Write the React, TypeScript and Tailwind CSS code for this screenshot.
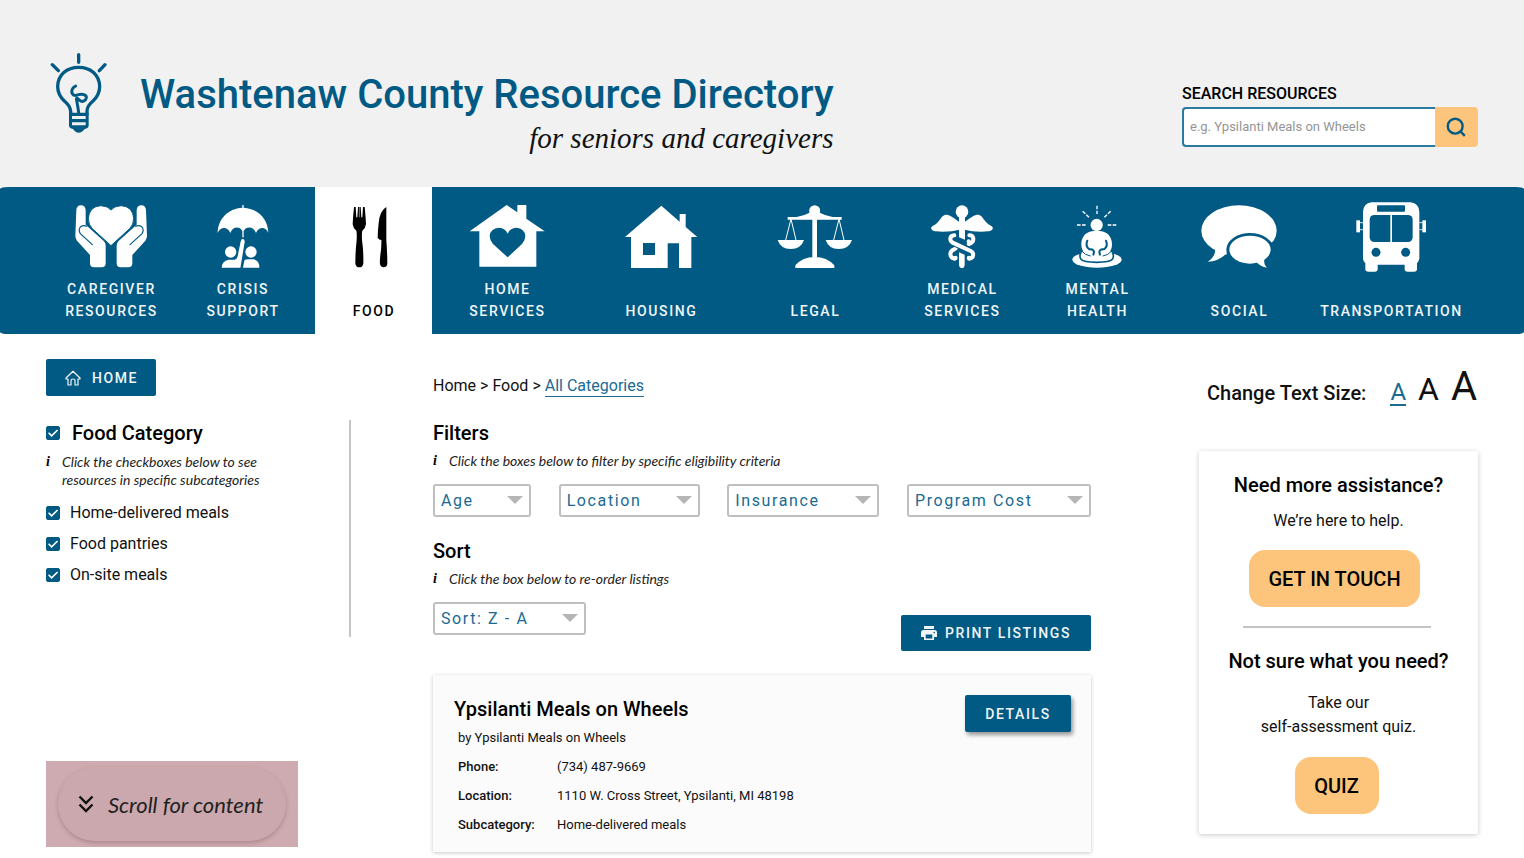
import React, { useState } from "react";

const BLUE = "#005a84";

function BulbLogo() {
  return (
    <svg viewBox="150 66 174 246" className="h-[82px] w-[58px] shrink-0" fill="none" stroke={BLUE} strokeLinecap="round" aria-hidden="true">
      <path strokeWidth="10" d="M236 74V97M157 104L175 122M315 104L298 122" />
      <path strokeWidth="10" strokeLinecap="butt" d="M212 254V244C211 230 203 221 193 213C180 201 173 188 173 169C174 134 200 112 236 112C272 112 298 134 299 169C299 188 292 201 279 213C269 221 261 230 261 244V254" />
      <path strokeWidth="9" d="M227 168C216 173 213 184 217 191C221 200 229 196 236 194C246 190 260 195 259 203C257 214 246 217 239 211C232 205 228 201 230 211C232 224 235 234 236 250" />
      <path fill={BLUE} stroke="none" fillRule="evenodd" d="M207 248H266V286Q266 296 254 297Q246 308 236 308Q226 308 219 297Q207 296 207 286ZM216 258V267H257V258ZM216 277V286H257V277Z" />
    </svg>
  );
}

function CaregiverIcon() {
  const hand = (
    <>
      <path fill="#fff" d="M229 90Q230 76 243 76Q256 76 257 90V134L312 184Q317 189 317 197V250Q317 262 305 262H282Q270 262 270 250V225L231 182Q226 176 226 168Z" />
      <path stroke={BLUE} strokeWidth="3.5" strokeLinecap="round" fill="none" d="M277 194L241 161Q234 150 241 141Q250 134 260 139" />
    </>
  );
  return (
    <svg viewBox="222 66 222 210" className="h-[70px] w-[74px]" aria-hidden="true">
      {hand}
      <g transform="translate(667 0) scale(-1 1)">{hand}</g>
      <path fill="#fff" stroke={BLUE} strokeWidth="3" d="M333 197L277 146Q265 134 265 116Q267 79 303 77Q324 78 333 90Q342 78 363 77Q399 79 401 116Q401 134 389 146Z" />
    </svg>
  );
}

function CrisisIcon() {
  return (
    <svg viewBox="646 66 162 210" className="h-[70px] w-[54px]" fill="#fff" aria-hidden="true">
      <path d="M651 159C652 116 682 86 725 83V75H729V83C772 86 802 116 803 159C796 139 774 139 766 159C759 139 737 138 729 153V176H725V153C717 138 696 139 689 159C681 139 659 139 651 159Z" />
      <circle cx="690" cy="216" r="17" />
      <circle cx="751" cy="216" r="17" />
      <path stroke={BLUE} strokeWidth="4" d="M718 184Q720 174 727 174Q735 176 734 186L721 265H661Q661 240 684 237H701Q707 236 709 228Z" />
      <path d="M727 263L731 242Q733 238 745 238H758Q776 240 776 263Z" />
    </svg>
  );
}

function FoodIcon() {
  return (
    <svg viewBox="1057 66 129 210" className="h-[70px] w-[43px]" fill="#000" aria-hidden="true">
      <path d="M1063 81H1068L1070 112H1073L1075 81H1083L1085 112H1088L1090 81H1095Q1098 110 1099 132Q1098 144 1088 152Q1086 158 1087 180Q1092 215 1091 251Q1089 262 1079 262Q1069 262 1067 251Q1067 215 1071 180Q1072 158 1070 152Q1060 144 1059 132Q1060 110 1063 81Z" />
      <path stroke="#fff" strokeWidth="1.5" d="M1079 81V112" />
      <path d="M1160 81Q1140 92 1137 130Q1134 155 1134 173Q1138 180 1145 180Q1146 200 1142 225Q1140 245 1141 253Q1144 262 1152 262Q1161 262 1163 252Q1163 220 1160 180Z" />
    </svg>
  );
}

function HomeServicesIcon() {
  return (
    <svg viewBox="118 66 228 210" className="h-[70px] w-[76px]" fill="#fff" fillRule="evenodd" aria-hidden="true">
      <path d="M120 154L231 75L263 97V75H290V116L345 154H320V260H149V154ZM234 232L190 192Q180 181 180 168Q182 145 208 143Q227 144 234 161Q241 144 260 143Q285 145 287 168Q287 181 277 192Z" />
    </svg>
  );
}

function HousingIcon() {
  return (
    <svg viewBox="586 66 216 210" className="h-[70px] w-[72px]" fill="#fff" fillRule="evenodd" aria-hidden="true">
      <path d="M586 171L695 77L750 125V102H768V141L803 171H785V264H748V190H714V264H604V171ZM640 189V225H676V189Z" />
    </svg>
  );
}

function LegalIcon() {
  const pan = (
    <>
      <path d="M1043 180H1122Q1113 207 1082 207Q1052 207 1043 180Z" />
      <path fill="none" stroke="#fff" strokeWidth="3" d="M1067 180L1083 117L1098 180" />
    </>
  );
  return (
    <svg viewBox="1041 66 228 210" className="h-[70px] w-[76px]" fill="#fff" aria-hidden="true">
      <circle cx="1154" cy="92" r="16.5" />
      <path d="M1073 111H1100Q1122 108 1142 97H1166Q1186 108 1208 111H1235V119H1161V232H1147V119H1073Z" />
      <path d="M1096 264V256Q1118 231 1154 231Q1191 231 1213 256V264Z" />
      {pan}
      <g transform="translate(144 0)">{pan}</g>
    </svg>
  );
}

function MedicalIcon() {
  const wing = <path d="M298 126C280 112 268 104 258 104C248 105 244 113 236 124C230 132 222 136 215 140C211 146 216 153 228 154C256 157 280 153 298 149Z" />;
  return (
    <svg viewBox="210 66 192 210" className="h-[70px] w-[64px]" fill="#fff" aria-hidden="true">
      <circle cx="306" cy="95" r="19" />
      <path d="M297 110H315V179L297 172Z" />
      {wing}
      <g transform="translate(612 0) scale(-1 1)">{wing}</g>
      <path d="M297 217L314 224V254Q313 264 306 264Q298 264 297 254Z" />
      <g fill="none" stroke="#fff" strokeWidth="12" strokeLinecap="round">
        <path d="M328 166C343 166 343 183 333 189L326 193" />
        <path d="M287 205L281 209C267 215 268 234 284 236" />
        <path stroke={BLUE} strokeWidth="20" strokeLinecap="butt" d="M277 187L334 213" />
        <path d="M283 166C268 167 268 182 278 188L332 213C343 218 342 234 328 236" />
      </g>
      <circle cx="326" cy="184" r="6" />
      <circle cx="286" cy="234" r="7" />
      <circle cx="327" cy="234" r="7" />
    </svg>
  );
}

function MentalIcon() {
  return (
    <svg viewBox="637 66 150 210" className="h-[70px] w-[50px]" fill="#fff" aria-hidden="true">
      <circle cx="711" cy="135" r="18.5" />
      <path fill="none" stroke="#fff" strokeWidth="4" strokeDasharray="11 4" d="M652 135H678M770 135H744M669 94L688 112M753 94L734 112M712 77V102" />
      <ellipse cx="712" cy="239" rx="74" ry="24" />
      <path stroke={BLUE} strokeWidth="5" d="M671 209C659 217 659 232 664 238C670 246 686 247 711 247C736 247 752 246 758 238C763 232 763 217 751 209Z" />
      <path d="M690 155Q711 150 732 155C750 161 757 177 757 194C757 206 752 214 746 219L733 231H689L676 219C670 214 665 206 665 194C665 177 672 161 690 155Z" />
      <path fill="none" stroke={BLUE} strokeWidth="6" strokeLinecap="round" d="M683 182C678 194 681 203 689 208C700 207 706 212 701 224M739 182C744 194 741 203 733 208C722 207 716 212 721 224" />
      <path fill="none" stroke={BLUE} strokeWidth="3" strokeLinecap="round" d="M667 214Q676 226 692 228M755 214Q746 226 730 228" />
    </svg>
  );
}

function SocialIcon() {
  return (
    <svg viewBox="63 66 228 210" className="h-[70px] w-[76px]" fill="#fff" aria-hidden="true">
      <ellipse cx="177" cy="152" rx="113" ry="76" />
      <path d="M105 205Q109 228 83 245Q118 245 145 215Z" />
      <ellipse cx="210" cy="209" rx="71" ry="50" fill={BLUE} />
      <path fill={BLUE} d="M140 218H280V268H146Z" />
      <path fill={BLUE} d="M270 189L292 180V230H265Z" />
      <ellipse cx="210" cy="209" rx="62" ry="42" />
      <path d="M230 247Q243 262 261 263Q250 252 253 236Z" />
    </svg>
  );
}

function TransportIcon() {
  return (
    <svg viewBox="526 66 210 210" className="h-[70px] w-[70px]" fill="#fff" aria-hidden="true">
      <path d="M572 67H690Q715 70 716 96V236Q714 245 709 250V267Q709 275 700 275H681Q672 275 672 267V254H591V267Q591 275 582 275H563Q554 275 554 267V250Q548 245 547 236V96Q548 70 572 67Z" />
      <rect x="527" y="121" width="11" height="36" />
      <rect x="725" y="121" width="11" height="36" />
      <path fill="none" stroke="#fff" strokeWidth="2.5" d="M538 128H547M538 149H547M725 128H716M725 149H716" />
      <g fill={BLUE}>
        <rect x="589" y="76" width="84" height="19" rx="3" />
        <rect x="567" y="105" width="129" height="81" rx="14" />
        <circle cx="586" cy="217" r="13.5" />
        <circle cx="675" cy="217" r="13.5" />
      </g>
      <path d="M629 105H634V186H629Z" />
    </svg>
  );
}

const NAV: { label: string[]; icon: () => React.JSX.Element; active?: boolean }[] = [
  { label: ["CAREGIVER", "RESOURCES"], icon: CaregiverIcon },
  { label: ["CRISIS", "SUPPORT"], icon: CrisisIcon },
  { label: ["FOOD"], icon: FoodIcon, active: true },
  { label: ["HOME", "SERVICES"], icon: HomeServicesIcon },
  { label: ["HOUSING"], icon: HousingIcon },
  { label: ["LEGAL"], icon: LegalIcon },
  { label: ["MEDICAL", "SERVICES"], icon: MedicalIcon },
  { label: ["MENTAL", "HEALTH"], icon: MentalIcon },
  { label: ["SOCIAL"], icon: SocialIcon },
  { label: ["TRANSPORTATION"], icon: TransportIcon },
];

function Header() {
  return (
    <header className="flex h-[187px] items-start justify-between bg-[#f1f1f1] pr-[46px] pl-[50px]">
      <div className="flex items-start gap-8 pt-[52px]">
        <BulbLogo />
        <div className="pt-[19px] text-right">
          <h1 className="text-[40px] leading-[48px] font-medium whitespace-nowrap text-[#005a84]">Washtenaw County Resource Directory</h1>
          <p className="font-['Liberation_Serif',serif] text-[29px] leading-[38px] text-[#111] italic">for seniors and caregivers</p>
        </div>
      </div>
      <form className="w-[296px] shrink-0 pt-[83px]" onSubmit={(e) => e.preventDefault()}>
        <label htmlFor="search" className="block h-6 text-base leading-[22px] font-medium text-black">
          SEARCH RESOURCES
        </label>
        <div className="flex h-10">
          <input
            id="search"
            type="search"
            placeholder="e.g. Ypsilanti Meals on Wheels"
            className="min-w-0 flex-1 rounded-l border-2 border-r-0 border-[#2b7aa0] bg-white px-1.5 text-[13px] text-black outline-none placeholder:text-[#959595]"
          />
          <button type="submit" aria-label="Search" className="flex w-[43px] items-center justify-center rounded-r bg-[#fdc57b] pr-0.5">
            <svg viewBox="0 0 20 20" className="size-5" fill="none" stroke={BLUE} strokeWidth="2.4" aria-hidden="true">
              <circle cx="9.2" cy="9.2" r="7.4" />
              <path d="M14.2 14.2L18.8 18.8" />
            </svg>
          </button>
        </div>
      </form>
    </header>
  );
}

function MainNav() {
  return (
    <nav className="rounded-[8px/2px] bg-[#005a84] pr-[60px] pl-[52px]">
      <ul className="grid h-[147px] grid-cols-[118fr_145fr_117fr_150fr_158fr_150fr_144fr_126fr_158fr_146fr]">
        {NAV.map(({ label, icon: Icon, active }) => (
          <li key={label.join(" ")} className={active ? "bg-white text-black" : "text-[#f1f5f8]"}>
            <a href="#" className="flex h-full flex-col items-center justify-between pt-[15px] pb-3">
              <Icon />
              <span className="pl-px text-center text-sm leading-[22px] font-medium tracking-[1.6px] whitespace-nowrap">
                {label.map((line) => (
                  <span key={line} className="block">{line}</span>
                ))}
              </span>
            </a>
          </li>
        ))}
      </ul>
    </nav>
  );
}

function Check({ id }: { id: string }) {
  const [on, setOn] = useState(true);
  return (
    <span className="relative size-3.5 shrink-0">
      <input
        id={id}
        type="checkbox"
        checked={on}
        onChange={() => setOn(!on)}
        className="block size-3.5 appearance-none rounded-[2px] border border-[#005a84] bg-white checked:bg-[#005a84]"
      />
      {on && (
        <svg viewBox="0 0 14 14" className="pointer-events-none absolute inset-0 size-3.5" fill="none" stroke="#fff" strokeWidth="1.6" aria-hidden="true">
          <path d="M2.6 6.8L5.6 9.8L11.6 4" />
        </svg>
      )}
    </span>
  );
}

function Hint({ children, className = "" }: { children: React.ReactNode; className?: string }) {
  return (
    <p className={`flex font-[Lato,sans-serif] text-sm leading-[18px] text-[#222] italic ${className}`}>
      <span className="w-4 shrink-0 font-['Liberation_Serif',serif] text-sm leading-[18px] font-bold text-black" aria-hidden="true">i</span>
      <span>{children}</span>
    </p>
  );
}

function Dropdown({ label, width }: { label: string; width: string }) {
  return (
    <div className={`relative ${width}`}>
      <select aria-label={label} className="block h-[33px] w-full appearance-none rounded-[3px] border-2 border-[#bfbfbf] bg-white pl-1.5 text-base tracking-[1.6px] text-[#1a6a92]">
        <option>{label}</option>
      </select>
      <svg viewBox="0 0 16 8" className="pointer-events-none absolute top-3 right-2 h-2 w-4" fill="#b5b5b5" aria-hidden="true">
        <path d="M0 0H16L8 8Z" />
      </svg>
    </div>
  );
}

const CATEGORIES = ["Home-delivered meals", "Food pantries", "On-site meals"];

function Sidebar() {
  return (
    <aside className="flex flex-col items-start pt-[25px]">
      <a href="#" className="flex h-[37px] items-center gap-[11px] rounded-[2px] bg-[#005a84] pr-[18px] pl-[19px] text-sm font-medium tracking-[1.6px] text-[#f1f5f8]">
        <svg viewBox="0 0 16 16" className="size-4" fill="none" stroke="currentColor" strokeWidth="1.2" strokeLinejoin="round" aria-hidden="true">
          <path d="M1 8L8 1.2L15 8V9H13V15H10V10.5Q10 9 8 9Q6 9 6 10.5V15H3V9H1Z" />
        </svg>
        HOME
      </a>
      <div className="mt-6 h-[217px] w-full border-r-2 border-[#c4c4c4]">
        <div className="flex items-center gap-3">
          <Check id="all-food" />
          <label htmlFor="all-food" className="text-xl leading-[26px] font-medium text-black">Food Category</label>
        </div>
        <Hint className="mt-[7px]">
          Click the checkboxes below to see
          <br />
          resources in specific subcategories
        </Hint>
        <ul className="mt-2">
          {CATEGORIES.map((name, i) => (
            <li key={name} className="flex h-[31px] items-center gap-2.5">
              <Check id={`category-${i}`} />
              <label htmlFor={`category-${i}`} className="text-base text-[#111]">{name}</label>
            </li>
          ))}
        </ul>
      </div>
      <div className="mt-[124px] bg-[#ceabb0] px-3 py-1.5">
        <button type="button" className="flex h-[74px] w-[228px] items-center gap-3.5 rounded-full bg-[#cba8ad] pl-5 font-[Lato,sans-serif] text-[22px] whitespace-nowrap text-[#222] italic shadow-[0_2px_4px_rgba(90,50,60,0.28)]">
          <svg viewBox="0 0 16 18" className="h-[18px] w-4 shrink-0" fill="none" stroke="#111" strokeWidth="2.4" aria-hidden="true">
            <path d="M1.5 1.5L8 8L14.5 1.5M1.5 9.5L8 16L14.5 9.5" />
          </svg>
          Scroll for content
        </button>
      </div>
    </aside>
  );
}

const DETAILS = [
  ["Phone:", "(734) 487-9669"],
  ["Location:", "1110 W. Cross Street, Ypsilanti, MI 48198"],
  ["Subcategory:", "Home-delivered meals"],
];

function Listings() {
  return (
    <main className="mr-[108px] ml-[82px] pt-[42px]">
      <nav aria-label="Breadcrumb" className="flex gap-1 text-base leading-5 whitespace-nowrap text-[#111]">
        <a href="#">Home</a>
        <span>&gt;</span>
        <a href="#">Food</a>
        <span>&gt;</span>
        <a href="#" className="border-b border-[#1a6a92] text-[#1a6a92]">All Categories</a>
      </nav>
      <h2 className="mt-[23px] text-xl leading-[26px] font-medium text-black">Filters</h2>
      <Hint className="mt-1.5">Click the boxes below to filter by specific eligibility criteria</Hint>
      <div className="mt-3.5 flex justify-between">
        <Dropdown label="Age" width="w-[98px]" />
        <Dropdown label="Location" width="w-[141px]" />
        <Dropdown label="Insurance" width="w-[152px]" />
        <Dropdown label="Program Cost" width="w-[184px]" />
      </div>
      <h2 className="mt-[21px] text-xl leading-[26px] font-medium text-black">Sort</h2>
      <Hint className="mt-1.5">Click the box below to re-order listings</Hint>
      <div className="mt-3.5 flex items-start justify-between">
        <Dropdown label="Sort: Z - A" width="w-[153px]" />
        <button type="button" className="mt-[13px] flex h-9 items-center gap-2 rounded-[2px] bg-[#005a84] px-5 text-sm font-medium tracking-[1.6px] text-[#f1f5f8]">
          <svg viewBox="0 0 16 14" className="h-3.5 w-4" fill="currentColor" fillRule="evenodd" aria-hidden="true">
            <path d="M3 0H13V3H3ZM2.5 4H13.5Q16 4 16 6.5V11H13V14H3V11H0V6.5Q0 4 2.5 4ZM4.7 8.5V12.4H11.3V8.5ZM13.2 5.8A.8.8 0 1 0 13.2 7.4A.8.8 0 1 0 13.2 5.8Z" />
          </svg>
          PRINT LISTINGS
        </button>
      </div>
      <article className="mt-6 flex h-[177px] items-start justify-between bg-[#fbfbfb] pr-5 pl-[21px] shadow-[0_1px_4px_rgba(0,0,0,0.22)]">
        <div className="pt-[21px]">
          <h3 className="text-xl leading-[26px] font-medium text-black">Ypsilanti Meals on Wheels</h3>
          <p className="mt-[7px] pl-1 text-[13px] leading-[18px] text-[#111]">by Ypsilanti Meals on Wheels</p>
          <dl className="mt-[5px] grid grid-cols-[99px_auto] pl-1 text-[13px] leading-[29px] text-[#111]">
            {DETAILS.map(([term, value]) => (
              <React.Fragment key={term}>
                <dt className="font-medium">{term}</dt>
                <dd>{value}</dd>
              </React.Fragment>
            ))}
          </dl>
        </div>
        <button type="button" className="mt-5 h-[37px] w-[106px] rounded-[2px] bg-[#005a84] text-sm font-medium tracking-[1.6px] text-[#f1f5f8] shadow-[2px_3px_4px_rgba(0,0,0,0.4)]">
          DETAILS
        </button>
      </article>
    </main>
  );
}

function HelpPanel() {
  return (
    <aside className="pt-[34px]">
      <div className="flex h-[38px] items-baseline pl-2 text-[#111]">
        <span className="mr-6 text-xl leading-[38px] font-medium whitespace-nowrap">Change Text Size:</span>
        <button type="button" aria-label="Small text" className="mr-3 border-b-2 border-[#1a6a92] text-2xl leading-6 text-[#1a6a92]">A</button>
        <button type="button" aria-label="Medium text" className="mr-3 text-[32px] leading-[38px]">A</button>
        <button type="button" aria-label="Large text" className="text-[40px] leading-[38px]">A</button>
      </div>
      <section className="mt-[45px] flex h-[383px] flex-col items-center rounded-[2px] bg-white pt-[21px] text-center text-black shadow-[0_1px_5px_rgba(0,0,0,0.22)]">
        <h2 className="text-xl leading-[26px] font-medium">Need more assistance?</h2>
        <p className="mt-[11px] text-base leading-6 text-[#111]">We’re here to help.</p>
        <button type="button" className="mt-[17px] mr-2 h-[57px] w-[171px] rounded-2xl bg-[#fdc57b] text-xl font-medium">GET IN TOUCH</button>
        <hr className="mt-[19px] mr-1 w-[188px] border-t-2 border-[#c4c4c4]" />
        <h2 className="mt-5 text-xl leading-[26px] font-medium">Not sure what you need?</h2>
        <p className="mt-[17px] text-base leading-6 text-[#111]">
          Take our
          <br />
          self-assessment quiz.
        </p>
        <button type="button" className="mt-[18px] mr-1 h-[57px] w-[84px] rounded-2xl bg-[#fdc57b] text-xl font-medium">QUIZ</button>
      </section>
    </aside>
  );
}

export default function App() {
  return (
    <div className="min-h-screen bg-white font-[Roboto,sans-serif]">
      <Header />
      <MainNav />
      <div className="grid grid-cols-[305px_minmax(0,1fr)_279px] px-[46px]">
        <Sidebar />
        <Listings />
        <HelpPanel />
      </div>
    </div>
  );
}
